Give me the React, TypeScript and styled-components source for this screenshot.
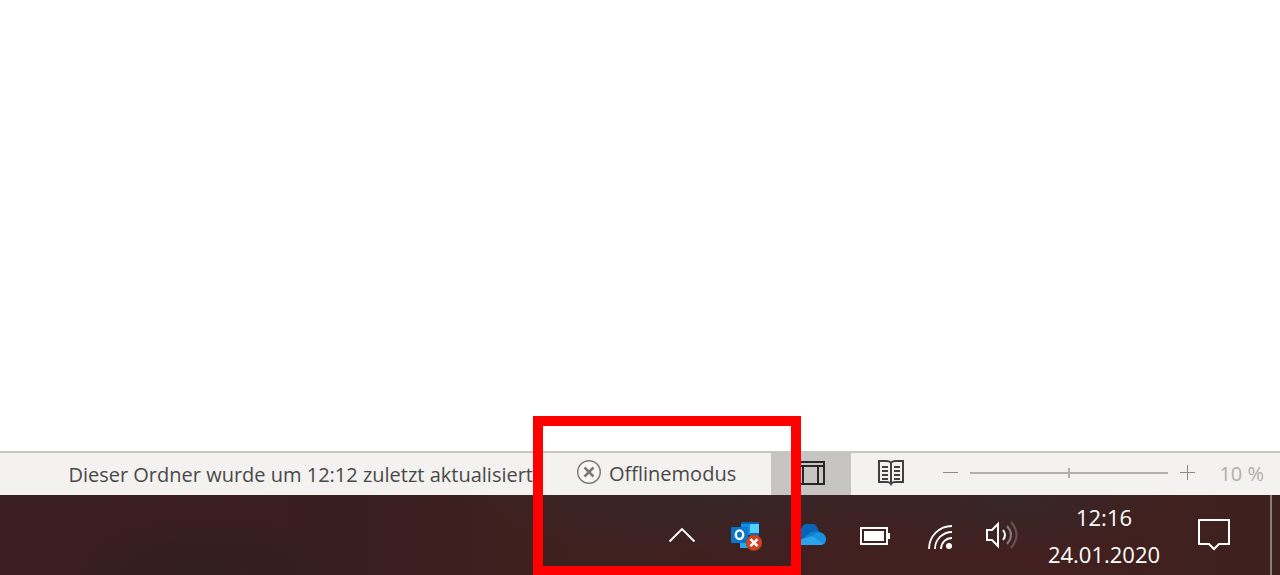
import React from "react";
import styled, { createGlobalStyle } from "styled-components";

const GlobalStyle = createGlobalStyle`
  * { box-sizing: border-box; }
  body {
    margin: 0;
    background: #fff;
    font-family: "Open Sans", "Noto Sans", sans-serif;
  }
  button {
    margin: 0;
    padding: 0;
    border: 0;
    background: none;
    color: inherit;
    font: inherit;
  }
  svg { display: block; flex: none; }
`;

const Page = styled.div`
  display: flex;
  flex-direction: column;
  min-height: 100vh;
  overflow: hidden;
`;

const Content = styled.main`
  flex: 1;
`;

const Bottom = styled.div`
  position: relative;
`;

const StatusBar = styled.footer`
  display: flex;
  height: 44px;
  background: #f3f2f0;
  box-shadow: inset 0 2px #c6c5c2;
  color: #4a4948;
  font-size: 20px;
  line-height: 28px;
  white-space: nowrap;
`;

const FolderStatus = styled.div`
  display: flex;
  flex: 1;
  justify-content: flex-end;
  align-items: center;
  padding: 4px 10px 0 0;
`;

const OfflineButton = styled.button`
  display: flex;
  align-items: center;
  gap: 8px;
  width: 228px;
  padding: 2px 0 4px 34px;
`;

const OfflineLabel = styled.span`
  padding-top: 4px;
`;

const ViewButton = styled.button<{ $active?: boolean }>`
  display: flex;
  justify-content: center;
  align-items: center;
  width: 80px;
  background: ${(p) => (p.$active ? "#c6c5c4" : "transparent")};
`;

const ZoomGroup = styled.div`
  display: flex;
  align-items: center;
  gap: 12px;
  padding: 0 16px 0 12px;
  color: #b1afad;
`;

const ZoomSlider = styled.input`
  appearance: none;
  width: 198px;
  height: 12px;
  margin: 0;
  background: linear-gradient(#b1afad, #b1afad) center / 100% 2px no-repeat;
  &::-webkit-slider-thumb {
    appearance: none;
    width: 2px;
    height: 10px;
    background: #b1afad;
  }
`;

const ZoomValue = styled.span`
  width: 57px;
  padding-top: 2px;
  text-align: right;
`;

const Taskbar = styled.nav`
  display: flex;
  justify-content: flex-end;
  height: 80px;
  color: #fff;
  background:
    radial-gradient(ellipse 260px 56px at 56% 0, #35292bcc, transparent),
    radial-gradient(ellipse 160px 60px at 79% 0, #34292dcc, transparent),
    radial-gradient(ellipse 150px 60px at 16% 100%, #321f1f, transparent),
    linear-gradient(90deg, #3b1e20, #391e20 28%, #3e211f 40%, #402020 62%, #42201f 82%, #3d211f);
`;

const TrayButton = styled.button<{ $wide?: boolean }>`
  display: flex;
  justify-content: center;
  align-items: center;
  width: ${(p) => (p.$wide ? 80 : 64)}px;
`;

const Clock = styled.button`
  width: 140px;
  padding-top: 2px;
  font-size: 22px;
  line-height: 37px;
  text-align: center;
`;

const ClockLine = styled.time`
  display: block;
`;

const ShowDesktop = styled.button`
  width: 10px;
  margin-left: 16px;
  border-left: 2px solid #8b7a79;
`;

const Highlight = styled.div`
  position: absolute;
  right: 479px;
  bottom: 0;
  width: 268px;
  height: 159px;
  border: 10px solid #f00;
  border-bottom-width: 9px;
  pointer-events: none;
`;

const OfflineIcon = () => (
  <svg width="24" height="24" viewBox="0 0 24 24" fill="none">
    <circle cx="12" cy="12" r="11.3" fill="#f8f7f6" stroke="#7b7979" strokeWidth="1.4" />
    <path d="M7.5 7.5l9 9m0-9l-9 9" stroke="#7b7979" strokeWidth="2.5" />
  </svg>
);

const LayoutIcon = () => (
  <svg width="30" height="24" viewBox="0 0 30 24" fill="none" stroke="#262626" strokeWidth="2">
    <path d="M1 1h27v22H1zM1 5h27M7 5v18M22 5v18" />
  </svg>
);

const BookIcon = () => (
  <svg width="28" height="28" viewBox="0 1 28 28" fill="none" stroke="#424141" strokeWidth="2">
    <path d="M14 4.500Q12 3 9.500 3H2v21h8q3 0 4 2 1-2 4-2h8V3h-7.500Q16 3 14 4.500zM14 4v22" />
    <path d="M5 9h6M5 13h6M5 17h6M5 21h6M17 9h6M17 13h6M17 17h6M17 21h6" />
  </svg>
);

const ZoomSign = ({ plus }: { plus?: boolean }) => (
  <svg width="15" height="17" viewBox="0 0 15 17" stroke="#8d8b89">
    <path d={plus ? "M0 7.5h15M7.5 0v15" : "M0 7.5h15"} />
  </svg>
);

const ChevronIcon = () => (
  <svg width="28" height="16" viewBox="0 0 28 16" fill="none" stroke="#fff" strokeWidth="1.9">
    <path d="M1.500 14.500L14 2l12.500 12.500" />
  </svg>
);

const OutlookIcon = () => (
  <svg width="32" height="32" viewBox="0 0 32 32">
    <path fill="#0a5fae" d="M11 3h18v3H11z" />
    <path fill="#168fe0" d="M11 5h9v11h-9z" />
    <path fill="#50d3fb" d="M20 5h9v11h-9z" />
    <path fill="#0f6cba" d="M20 14h9v8h-9z" />
    <path fill="#29a8ea" d="M10 20h15v9H10z" />
    <rect x="1" y="8" width="17" height="16" rx="1" fill="#0875cf" />
    <ellipse cx="9.500" cy="15.700" rx="3.700" ry="4.300" fill="none" stroke="#fff" strokeWidth="2.400" />
    <circle cx="24" cy="23.700" r="8" fill="#cf4524" stroke="#813d30" strokeWidth=".5" />
    <path d="M20.500 20.200l7 7m0-7l-7 7" stroke="#fff" strokeWidth="2.400" />
  </svg>
);

const CloudIcon = () => (
  <svg width="32" height="22" viewBox="0 0 32 22">
    <path fill="#0864b8" d="M7 20a6 6 0 0 1-1-11A9.500 9.500 0 0 1 25 8l-8 12z" />
    <path fill="#147fd1" d="M4 18l12-9q4-2 8-1.300 7 1 8 7L20 20z" />
    <path fill="#29a5eb" d="M5 21Q2 20 2 17L18 12l13 6q-1 3-4 3z" />
    <path fill="#1793df" d="M18 12l6-4q8 1 8 8 0 2-2 4z" />
  </svg>
);

const BatteryIcon = () => (
  <svg width="32" height="20" viewBox="-2 -2 32 20">
    <path d="M1 1h26v16H1z" fill="none" stroke="#fff" strokeWidth="2" />
    <path d="M4 4h20v10H4zM28 6h2v6h-2z" fill="#fff" />
  </svg>
);

const WifiIcon = () => (
  <svg width="28" height="30" viewBox="-2 -1 28 30" fill="none" stroke="#fff" strokeWidth="1.8">
    <path d="M3 28A23 23 0 0 1 26 5M9 28A17 17 0 0 1 26 11M15 28A11 11 0 0 1 26 17" />
    <circle cx="23" cy="25" r="3" fill="#fff" stroke="none" />
  </svg>
);

const VolumeIcon = () => (
  <svg width="32" height="28" viewBox="0 0 32 28" fill="none" stroke="#fff" strokeWidth="2">
    <path d="M1 9h5l6-6v22l-6-6H1z" />
    <path d="M17 9q4 5 0 10" />
    <path d="M21 5q8 9 0 18" stroke="#8c7777" />
    <path d="M25 1q11 13 0 26" stroke="#6c5050" />
  </svg>
);

const MessageIcon = () => (
  <svg width="32" height="32" viewBox="0 0 32 32" fill="none" stroke="#fff" strokeWidth="2">
    <path d="M1 1h30v24H21l-5 5-5-5H1z" />
  </svg>
);

export default function App() {
  return (
    <Page>
      <GlobalStyle />
      <Content />
      <Bottom>
        <StatusBar>
          <FolderStatus>Dieser Ordner wurde um 12:12 zuletzt aktualisiert</FolderStatus>
          <OfflineButton>
            <OfflineIcon />
            <OfflineLabel>Offlinemodus</OfflineLabel>
          </OfflineButton>
          <ViewButton $active aria-label="Normal"><LayoutIcon /></ViewButton>
          <ViewButton aria-label="Lesen"><BookIcon /></ViewButton>
          <ZoomGroup>
            <button aria-label="Verkleinern"><ZoomSign /></button>
            <ZoomSlider type="range" aria-label="Zoom" defaultValue={50} />
            <button aria-label="Vergrößern"><ZoomSign plus /></button>
            <ZoomValue>10 %</ZoomValue>
          </ZoomGroup>
        </StatusBar>
        <Taskbar>
          <TrayButton aria-label="Ausgeblendete Symbole"><ChevronIcon /></TrayButton>
          <TrayButton aria-label="Outlook"><OutlookIcon /></TrayButton>
          <TrayButton aria-label="OneDrive"><CloudIcon /></TrayButton>
          <TrayButton aria-label="Akku"><BatteryIcon /></TrayButton>
          <TrayButton aria-label="Netzwerk"><WifiIcon /></TrayButton>
          <TrayButton aria-label="Lautstärke"><VolumeIcon /></TrayButton>
          <Clock>
            <ClockLine>12:16</ClockLine>
            <ClockLine>24.01.2020</ClockLine>
          </Clock>
          <TrayButton $wide aria-label="Info-Center"><MessageIcon /></TrayButton>
          <ShowDesktop aria-label="Desktop anzeigen" />
        </Taskbar>
        <Highlight />
      </Bottom>
    </Page>
  );
}
